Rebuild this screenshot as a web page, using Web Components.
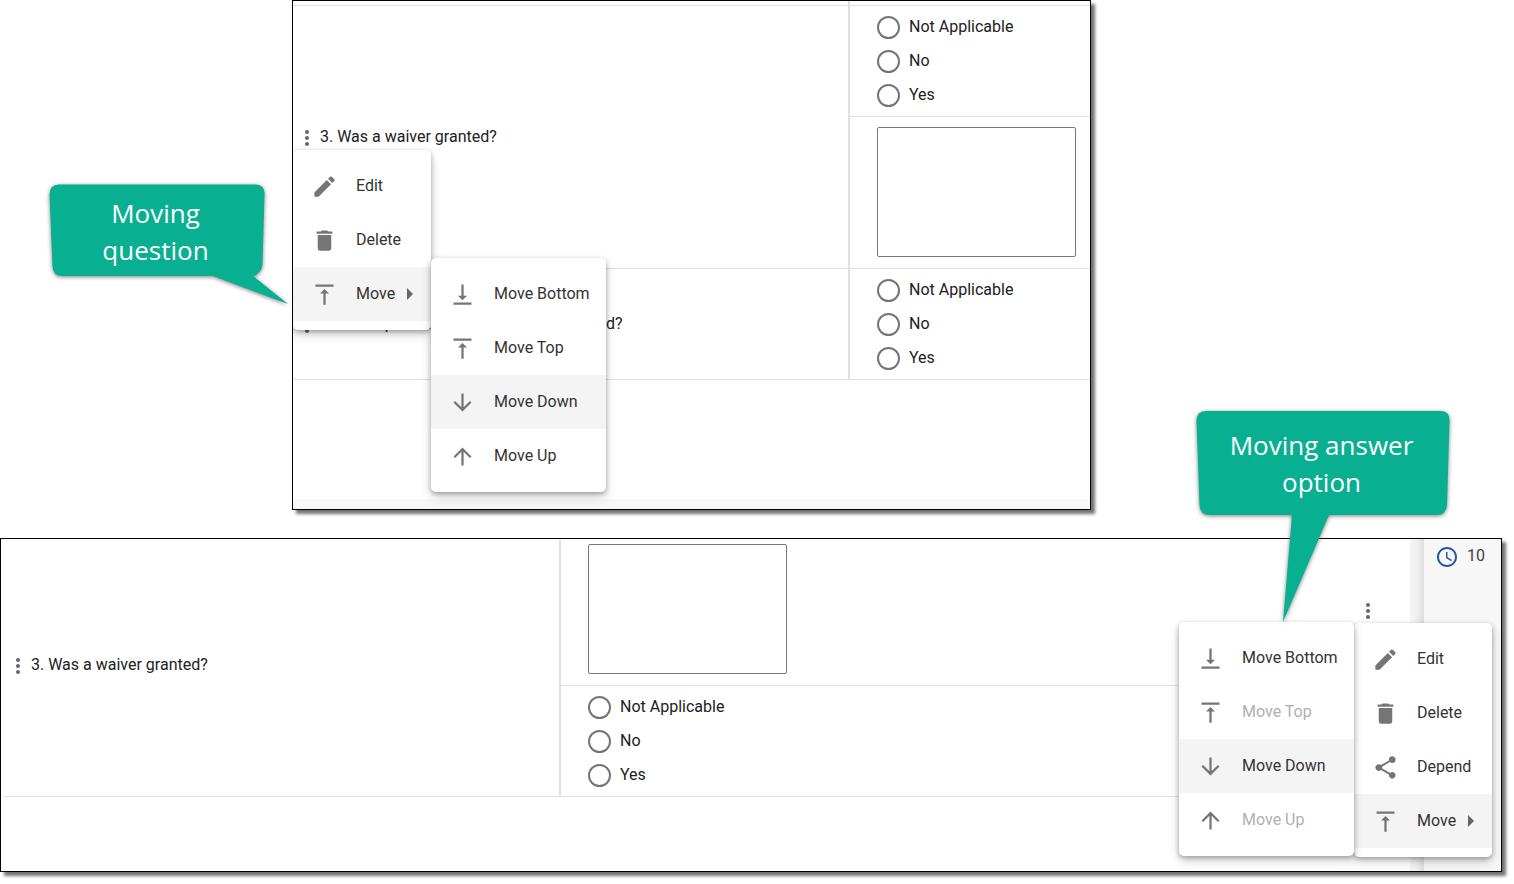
<!DOCTYPE html>
<html lang="en">
<head>
<meta charset="utf-8">
<title>Moving questions and answer options</title>
<style>
  body { margin: 0; background: #fff; font: 16px/24px Roboto, "Liberation Sans", sans-serif; color: #212121; }
</style>
</head>
<body>
<help-figure></help-figure>

<script>
const ICONS = {
  edit: 'M3 17.25V21h3.75L17.81 9.94l-3.75-3.75L3 17.25zM20.71 7.04a1 1 0 0 0 0-1.41l-2.34-2.34a1 1 0 0 0-1.41 0l-1.83 1.83 3.75 3.75 1.83-1.83z',
  delete: 'M6 19c0 1.1.9 2 2 2h8c1.1 0 2-.9 2-2V7H6v12zM19 4h-3.5l-1-1h-5l-1 1H5v2h14V4z',
  depend: 'M18 16.08c-.76 0-1.44.3-1.96.77L8.91 12.7c.05-.23.09-.46.09-.7s-.04-.47-.09-.7l7.05-4.11c.54.5 1.25.81 2.04.81 1.66 0 3-1.34 3-3s-1.34-3-3-3-3 1.34-3 3c0 .24.04.47.09.7L8.04 9.81C7.5 9.31 6.79 9 6 9c-1.66 0-3 1.34-3 3s1.34 3 3 3c.79 0 1.5-.31 2.04-.81l7.12 4.16c-.05.21-.08.43-.08.65 0 1.61 1.31 2.92 2.92 2.92s2.92-1.31 2.92-2.92-1.31-2.92-2.92-2.92z',
  top: 'M8 11h3v10h2V11h3l-4-4-4 4zM4 3v2h16V3H4z',
  bottom: 'M16 13h-3V3h-2v10H8l4 4 4-4zM4 19v2h16v-2H4z',
  down: 'M20 12l-1.41-1.41L13 16.17V4h-2v12.17l-5.58-5.59L4 12l8 8 8-8z',
  up: 'M4 12l1.41 1.41L11 7.83V20h2V7.83l5.58 5.59L20 12l-8-8-8 8z',
  more: 'M12 8c1.1 0 2-.9 2-2s-.9-2-2-2-2 .9-2 2 .9 2 2 2zm0 2c-1.1 0-2 .9-2 2s.9 2 2 2 2-.9 2-2-.9-2-2-2zm0 6c-1.1 0-2 .9-2 2s.9 2 2 2 2-.9 2-2-.9-2-2-2z',
  clock: 'M11.99 2C6.47 2 2 6.48 2 12s4.47 10 9.99 10C17.52 22 22 17.52 22 12S17.52 2 11.99 2zM12 20c-4.42 0-8-3.58-8-8s3.58-8 8-8 8 3.58 8 8-3.58 8-8 8zM12.5 7H11v6l5.25 3.15.75-1.23-4.5-2.67z'
};

function define(name, html, setup) {
  const template = document.createElement('template');
  template.innerHTML = html;
  customElements.define(name, class extends HTMLElement {
    connectedCallback() {
      if (this.shadowRoot) return;
      this.attachShadow({ mode: 'open' }).append(template.content.cloneNode(true));
      if (setup) setup(this, this.shadowRoot);
    }
  });
}

define('app-icon', `
  <style>
    :host { display: block; flex: none; width: 27px; height: 27px; color: #757575; }
    svg { display: block; width: 100%; height: 100%; fill: currentColor; }
  </style>
  <svg viewBox="0 0 24 24" aria-hidden="true"><path/></svg>`,
  (host, root) => root.querySelector('path').setAttribute('d', ICONS[host.getAttribute('name')] || ''));

define('menu-item', `
  <style>
    :host { display: block; position: relative; }
    button { display: flex; align-items: center; gap: 18px; width: 100%; height: 54px; padding: 0 18px;
      border: 0; background: none; color: #333; font: 400 16px/24px Roboto, "Liberation Sans", sans-serif; text-align: left; white-space: nowrap; }
    :host([active]) button { background: #f4f4f4; }
    button:disabled { color: #b0b0b0; }
    .arrow { display: none; margin-left: -6px; border: 6px solid transparent; border-left-color: #666; border-right: 0; }
    :host([submenu]) .arrow { display: block; }
  </style>
  <button type="button" role="menuitem"><span class="label"><slot></slot></span><span class="arrow"></span></button>
  <slot name="submenu"></slot>`,
  (host, root) => {
    const button = root.querySelector('button');
    button.insertAdjacentHTML('afterbegin', `<app-icon name="${host.getAttribute('icon')}"></app-icon>`);
    button.disabled = host.hasAttribute('disabled');
  });

define('menu-panel', `
  <style>
    :host { display: block; position: absolute; z-index: 2; left: -2px; top: 26px; box-sizing: border-box; width: 138px;
      padding: 9px 0; border-radius: 5px; background: #fff;
      box-shadow: 0 2px 5px rgba(0,0,0,.3), 0 5px 12px rgba(0,0,0,.16); }
    :host([slot=submenu]) { width: 175px; left: 100%; top: -9px; }
    :host([side=left]) { left: auto !important; right: 100%; top: auto !important; bottom: -8px; }
  </style>
  <div role="menu"><slot></slot></div>`);

define('more-menu', `
  <style>
    :host { display: block; position: relative; flex: none; width: 24px; height: 26px; }
    button { display: block; width: 24px; height: 26px; padding: 2px 0 0; border: 0; background: none; }
    app-icon { width: 24px; height: 24px; color: #666; }
  </style>
  <button type="button" aria-label="More actions" aria-haspopup="menu"><app-icon name="more"></app-icon></button>
  <slot></slot>`);

define('question-label', `
  <style>
    :host { display: flex; align-items: center; gap: 1px; padding-left: 2px; }
    .text { white-space: nowrap; }
  </style>
  <slot name="menu"></slot><span class="text"><slot></slot></span>`);

define('answer-choices', `
  <style>
    :host { display: block; }
    fieldset { display: flex; flex-direction: column; gap: 11px; margin: 0; padding: 10px 0 9px; border: 0; min-width: 0; }
    label { display: flex; align-items: center; gap: 9px; height: 23px; line-height: 23px; }
    input { appearance: none; box-sizing: border-box; flex: none; width: 23px; height: 23px; margin: 0; border: 2px solid #757575; border-radius: 50%; background: #fff; }
    span { padding-bottom: 2px; }
  </style>
  <fieldset aria-label="Answer">
    <label><input type="radio" name="answer"><span>Not Applicable</span></label>
    <label><input type="radio" name="answer"><span>No</span></label>
    <label><input type="radio" name="answer"><span>Yes</span></label>
  </fieldset>`);

define('answer-text', `
  <style>
    :host { display: flex; align-items: center; justify-content: space-between; min-height: 132px; padding: 10px 30px 9px 0; }
    textarea { display: block; align-self: flex-start; box-sizing: border-box; flex: none; width: 199px; height: 130px; border: 1px solid #767676; border-radius: 2px; resize: none; background: #fff; }
  </style>
  <textarea aria-label="Answer text"></textarea><slot></slot>`);

const TABLE_STYLE = `
    table { width: 100%; border-collapse: separate; border-spacing: 0; table-layout: fixed; }
    td { padding: 0; border-bottom: 1px solid #e0e0e0; vertical-align: middle; }
    .q { box-sizing: border-box; width: 557px; border-right: 2px solid #e0e0e0; }
    .a { padding-left: 27px; }
    .stub td { height: 4px; }`;

const FRAME_STYLE = `
    :host { display: block; box-sizing: border-box; border: 1px solid #000; background: #fff; box-shadow: 4px 4px 3px rgba(0,0,0,.55); }`;

define('question-panel', `
  <style>${FRAME_STYLE}${TABLE_STYLE}
    .rest { height: 119px; }
    footer { height: 10px; background: #f7f7f7; }
    .clip { overflow: hidden; }
  </style>
  <div class="clip">
  <table>
    <colgroup><col style="width:557px"><col></colgroup>
    <tr class="stub"><td class="q"></td><td></td></tr>
    <tr>
      <td class="q" rowspan="2">
        <question-label>
          <more-menu slot="menu">
            <menu-panel>
              <menu-item icon="edit">Edit</menu-item>
              <menu-item icon="delete">Delete</menu-item>
              <menu-item icon="top" active submenu>Move
                <menu-panel slot="submenu">
                  <menu-item icon="bottom">Move Bottom</menu-item>
                  <menu-item icon="top">Move Top</menu-item>
                  <menu-item icon="down" active>Move Down</menu-item>
                  <menu-item icon="up">Move Up</menu-item>
                </menu-panel>
              </menu-item>
            </menu-panel>
          </more-menu>3. Was a waiver granted?
        </question-label>
      </td>
      <td class="a"><answer-choices></answer-choices></td>
    </tr>
    <tr><td class="a"><answer-text></answer-text></td></tr>
    <tr>
      <td class="q"><question-label><more-menu slot="menu"></more-menu>4. Was a permit, variance or notice issued?</question-label></td>
      <td class="a"><answer-choices></answer-choices></td>
    </tr>
  </table>
  <div class="rest"></div>
  <footer></footer>
  </div>`);

define('time-badge', `
  <style>
    :host { display: flex; align-items: center; gap: 8px; color: #424242; }
    app-icon { width: 24px; height: 24px; color: #2457a6; }
    span { padding-bottom: 2px; }
  </style>
  <app-icon name="clock"></app-icon><span><slot></slot></span>`);

define('answer-panel', `
  <style>${FRAME_STYLE}${TABLE_STYLE}
    .row { display: flex; min-height: 332px; overflow: hidden; }
    .content { position: relative; z-index: 1; flex: 1; min-width: 0; padding-left: 3px; }
    table { margin-top: -5px; }
    .edge { width: 14px; background: linear-gradient(to right, #f6f6f6, #f0f0f0 50%, #dedede); }
    aside { width: 66px; padding: 5px 0 0 11px; background: #f7f7f7; }
  </style>
  <div class="row">
    <div class="content">
      <table>
        <colgroup><col style="width:557px"><col></colgroup>
        <tr>
          <td class="q" rowspan="2"><question-label><more-menu slot="menu"></more-menu>3. Was a waiver granted?</question-label></td>
          <td class="a">
            <answer-text>
              <more-menu>
                <menu-panel>
                  <menu-item icon="edit">Edit</menu-item>
                  <menu-item icon="delete">Delete</menu-item>
                  <menu-item icon="depend">Depend</menu-item>
                  <menu-item icon="top" active submenu>Move
                    <menu-panel slot="submenu" side="left">
                      <menu-item icon="bottom">Move Bottom</menu-item>
                      <menu-item icon="top" disabled>Move Top</menu-item>
                      <menu-item icon="down" active>Move Down</menu-item>
                      <menu-item icon="up" disabled>Move Up</menu-item>
                    </menu-panel>
                  </menu-item>
                </menu-panel>
              </more-menu>
            </answer-text>
          </td>
        </tr>
        <tr><td class="a"><answer-choices></answer-choices></td></tr>
      </table>
    </div>
    <div class="edge"></div>
    <aside><time-badge>10</time-badge></aside>
  </div>`);

const BUBBLES = {
  question: { w: 216, h: 92, d: 'M10 0.500H206Q216 0.500 215.500 10L213.500 81Q212 90 204 92L239 120L164 92H13Q4 92 3.500 82L0.500 11Q0.500 0.500 10 0.500Z' },
  answer: { w: 254, h: 105, d: 'M10 1H244Q254 1 253.500 11L251 95Q250 105 241 105H133L87 212L96 105H14Q4 105 3.500 95L0.500 11Q0.500 1 10 1Z' }
};

define('callout-bubble', `
  <style>
    :host { display: grid; place-items: center; position: relative; z-index: 5; box-sizing: border-box; color: #fff;
      font: 26px/37px "Open Sans", "Noto Sans", sans-serif; text-align: center; }
    svg { position: absolute; inset: 0; width: 100%; height: 100%; overflow: visible; fill: #08af91; filter: drop-shadow(0 1px 2px rgba(0,0,0,.5)); }
    span { position: relative; padding: 3px 3px 0 0; }
  </style>
  <svg aria-hidden="true"><path/></svg><span><slot></slot></span>`,
  (host, root) => {
    const b = BUBBLES[host.getAttribute('shape')];
    host.style.width = b.w + 'px';
    host.style.minHeight = b.h + 'px';
    root.querySelector('svg').setAttribute('viewBox', `0 0 ${b.w} ${b.h}`);
    root.querySelector('path').setAttribute('d', b.d);
  });

define('help-figure', `
  <style>
    :host { display: block; padding-bottom: 12px; }
    .top { display: grid; grid-template-columns: 292px minmax(0, 1fr) 423px; align-items: start; margin-bottom: 23px; }
    .first { margin: 184px 0 0 49px; }
    .second { margin: 410px 0 0 105px; }
    answer-panel { margin-right: 12px; }
  </style>
  <div class="top">
    <callout-bubble class="first" shape="question"><div>Moving<br>question</div></callout-bubble>
    <question-panel></question-panel>
    <callout-bubble class="second" shape="answer"><div>Moving answer<br>option</div></callout-bubble>
  </div>
  <answer-panel></answer-panel>`);
</script>
</body>
</html>
